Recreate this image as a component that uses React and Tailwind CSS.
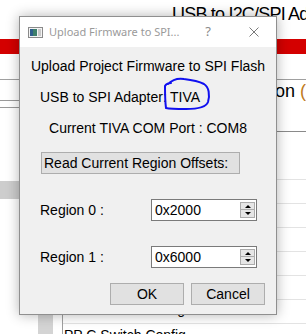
import * as React from "react";

const SpinBox = ({ value }) => (
  <div className="flex items-start w-[106px] h-[22px] border border-[#7a7a7a] bg-white">
    <div className="flex-1 pl-[3px] leading-[20px]">{value}</div>
    <div className="flex flex-col mt-[2px] mr-[1px]">
      <div className="flex items-center justify-center w-[15px] h-[8px] border border-[#acacac] bg-[#e6e6e6]">
        <div className="w-0 h-0 border-x-[3px] border-x-transparent border-b-[3px] border-b-black" />
      </div>
      <div className="flex items-center justify-center w-[15px] h-[8px] border border-t-0 border-[#acacac] bg-[#e6e6e6]">
        <div className="w-0 h-0 border-x-[3px] border-x-transparent border-t-[3px] border-t-black" />
      </div>
    </div>
  </div>
);

const TitleIcon = () => (
  <svg width="15" height="11" viewBox="0 0 15 11">
    <rect x="0.5" y="0.5" width="14" height="10" fill="#f4f4f4" stroke="#8a8a8a" />
    <rect x="2" y="2" width="7" height="7" fill="#3d7f6a" />
    <rect x="2" y="2" width="3" height="7" fill="#2f5d8c" />
    <rect x="10" y="2" width="3" height="7" fill="#c9c9c9" />
  </svg>
);

export default function App() {
  return (
    <div
      className="relative w-[306px] h-[334px] overflow-hidden bg-white text-black"
      style={{ fontFamily: '"Liberation Sans", Arial, sans-serif' }}
    >
      {/* background window */}
      <div className="h-[39px] pl-[172px] pt-[4px] text-[18px] leading-[20px] tracking-[-0.8px] whitespace-nowrap overflow-hidden">
        USB to I2C/SPI Adapter
      </div>
      <div className="h-[15px] bg-[#d40000]" />
      <div className="h-[26px] border-b border-[#a0a0a0]" />
      <div className="flex h-[52px]">
        <div className="w-[20px]">
          <div className="h-[21px] border-b border-[#9a9a9a]" />
          <div className="h-[7px] border-b border-[#9a9a9a]" />
        </div>
        <div className="flex-1 border-b border-[#8a8a8a] pl-[255px] text-[18px] leading-[22px] whitespace-nowrap overflow-hidden">
          on <span className="text-[#c07a20]">(</span>
        </div>
      </div>
      <div className="flex h-[203px]">
        <div className="w-[62px] flex flex-col">
          <div className="h-[49px]" />
          <div className="h-[18px] bg-[#cdcdcd]" />
          <div className="flex-1 pl-[38px]">
            <div className="w-[15px] h-full bg-[#d4d4d4]" />
          </div>
        </div>
        <div className="flex-1 border-l border-[#a0a0a0] text-[14px]">
          <div className="h-[48px] border-b border-[#e3e3e3]" />
          <div className="h-[24px] border-b border-[#e3e3e3]" />
          <div className="h-[24px] border-b border-[#e3e3e3]" />
          <div className="h-[24px] border-b border-[#e3e3e3]" />
          <div className="h-[24px] border-b border-[#e3e3e3]" />
          <div className="h-[24px] border-b border-[#e3e3e3]" />
          <div className="h-[24px] border-b border-[#e3e3e3] pl-[1px] leading-[18px]">PP B Switch Config</div>
          <div className="h-[24px] pl-[1px] leading-[22px]">PP C Switch Config</div>
        </div>
      </div>

      {/* dialog */}
      <div className="absolute left-[19px] top-[16px] w-[258px] h-[299px] flex flex-col border border-[#8f8f8f] shadow-[0_0_12px_rgba(0,0,0,0.3)]">
        <div className="h-[30px] bg-white flex items-center pl-[8px]">
          <TitleIcon />
          <span
            className="ml-[6px] w-[154px] text-[11px] text-[#9a9a9a] whitespace-nowrap"
            style={{ fontFamily: '"Noto Sans", "Open Sans", sans-serif' }}
          >
            Upload Firmware to SPI...
          </span>
          <span
            className="w-[10px] text-center text-[13px] text-[#8a8a8a]"
            style={{ fontFamily: '"Noto Sans", sans-serif' }}
          >
            ?
          </span>
          <svg className="ml-[36px]" width="10" height="10" viewBox="0 0 10 10">
            <path d="M0.5 0.5 L9.5 9.5 M9.5 0.5 L0.5 9.5" stroke="#7a7a7a" strokeWidth="1" fill="none" />
          </svg>
        </div>
        <div className="flex-1 bg-[#f0f0f0] pt-[11px] text-[14px] leading-[16px]">
          <div className="text-center whitespace-nowrap">Upload Project Firmware to SPI Flash</div>
          <div className="mt-[15px] pl-[20px] flex whitespace-nowrap">
            <span className="w-[130px]">USB to SPI Adapter:</span>
            <span>TIVA</span>
          </div>
          <div className="mt-[15px] text-center whitespace-nowrap">Current TIVA COM Port : COM8</div>
          <button className="block mt-[16px] ml-[21px] w-[199px] h-[22px] border border-[#adadad] bg-[#e1e1e1] text-left pl-[2px] leading-[20px] whitespace-nowrap">
            Read Current Region Offsets:
          </button>
          <div className="mt-[25px] flex items-center">
            <span className="pl-[20px] w-[131px]">Region 0 :</span>
            <SpinBox value="0x2000" />
          </div>
          <div className="mt-[25px] flex items-center">
            <span className="pl-[20px] w-[131px]">Region 1 :</span>
            <SpinBox value="0x6000" />
          </div>
          <div className="mt-[15px] flex">
            <button className="ml-[90px] w-[74px] h-[22px] border border-[#adadad] bg-[#e1e1e1] leading-[20px]">
              OK
            </button>
            <button className="ml-[7px] w-[74px] h-[22px] border border-[#adadad] bg-[#e1e1e1] leading-[20px]">
              Cancel
            </button>
          </div>
        </div>
      </div>

      {/* hand-drawn annotation */}
      <svg className="absolute left-[160px] top-[75px]" width="55" height="40" viewBox="0 0 55 40">
        <path
          d="M8 9 C12 5 18 3 24 4 C32 5 38 6 44 9 C49 12 50 20 48 27 C46 33 36 34 26 34 C18 34 10 34 6 33 C5 26 5 18 5 11 C6 9 9 8 11 8"
          stroke="#1010f0"
          strokeWidth="2"
          fill="none"
          strokeLinecap="round"
        />
      </svg>
    </div>
  );
}
